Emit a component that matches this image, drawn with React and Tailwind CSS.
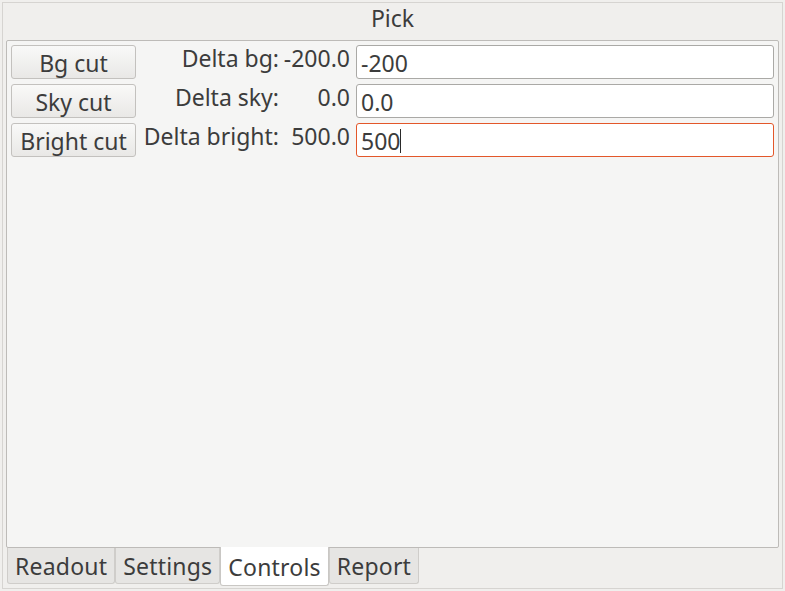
import React from "react";

const font = { fontFamily: '"Noto Sans", "Open Sans", sans-serif' };

const rows = [
  { btn: "Bg cut", label: "Delta bg:", value: "-200.0", input: "-200" },
  { btn: "Sky cut", label: "Delta sky:", value: "0.0", input: "0.0" },
  { btn: "Bright cut", label: "Delta bright:", value: "500.0", input: "500", focused: true },
];

const tabs = ["Readout", "Settings", "Controls", "Report"];

const App = () => {
  return (
    <div className="w-[785px] h-[591px] bg-[#f0efed] p-[2px] text-[#3c3c3c]" style={font}>
      <div className="h-full border border-[#d6d4d1] flex flex-col px-[3px]">
        <div className="h-[37px] flex items-center justify-center pb-[6px] text-[23px]">Pick</div>
        <div className="flex-1 border border-[#bdbbb8] rounded-[2px] bg-[#f5f5f4] px-[4px] pt-[4px]">
          <div className="flex flex-col gap-[5px]">
            {rows.map((r) => (
              <div key={r.btn} className="flex items-center h-[34px]">
                <button className="w-[125px] h-[34px] rounded-[3px] border border-[#c3c1be] bg-gradient-to-b from-[#f9f9f8] to-[#e9e8e6] text-[23px] leading-none text-[#3c3c3c] pt-[2px] whitespace-nowrap">
                  {r.btn}
                </button>
                <div className="w-[143px] text-right text-[23px] leading-none -mt-[8px] whitespace-nowrap">{r.label}</div>
                <div className="w-[71px] text-right text-[23px] leading-none -mt-[8px]">{r.value}</div>
                <div
                  className={
                    r.focused
                      ? "ml-[6px] flex-1 h-[34px] rounded-[3px] border border-[#e3572a] bg-white flex items-center px-[4px] pt-[2px] text-[23px]"
                      : "ml-[6px] flex-1 h-[34px] rounded-[3px] border border-[#aaa9a6] bg-white flex items-center px-[4px] pt-[2px] text-[23px]"
                  }
                >
                  <span>{r.input}</span>
                  {r.focused && <span className="w-px h-[24px] bg-[#2a2a2a]" />}
                </div>
              </div>
            ))}
          </div>
        </div>
        <div className="h-[40px] flex items-start pl-[1px] tracking-[0.2px]">
          {tabs.map((t) =>
            t === "Controls" ? (
              <div
                key={t}
                className="h-[39px] -mt-px px-[7px] pt-[2px] bg-white border border-t-0 border-[#c9c7c4] rounded-b-[3px] flex items-center text-[23px] text-[#3c3c3c]"
              >
                {t}
              </div>
            ) : (
              <div
                key={t}
                className="h-[36px] px-[7px] pt-[1px] bg-[#e6e5e3] border border-t-0 border-[#cfcdca] rounded-b-[3px] flex items-center text-[23px] text-[#3c3c3c]"
              >
                {t}
              </div>
            )
          )}
        </div>
      </div>
    </div>
  );
};

export default App;
